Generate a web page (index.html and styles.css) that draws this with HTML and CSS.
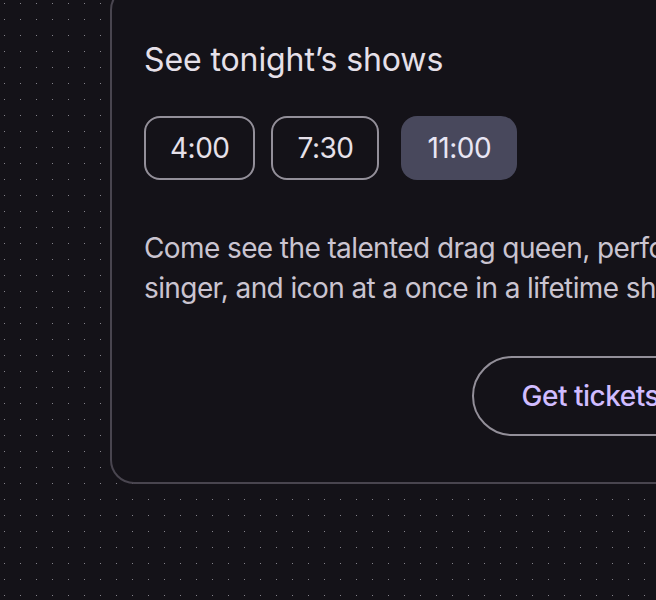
FILE: index.html
```html
<!DOCTYPE html>
<html lang="en">
<head>
<meta charset="utf-8">
<title>Tonight's shows</title>
<link rel="stylesheet" href="styles.css">
</head>
<body>
  <main class="card">
    <h2 class="title">See tonight’s shows</h2>
    <div class="chips">
      <button class="chip">4:00</button>
      <button class="chip">7:30</button>
      <button class="chip selected">11:00</button>
    </div>
    <p class="desc">Come see the talented drag queen, performer,<br>singer, and icon at a once in a lifetime show.</p>
    <div class="actions">
      <button class="btn">Get tickets</button>
    </div>
  </main>
</body>
</html>
```
FILE: styles.css
```css
html, body {
  margin: 0;
  height: 600px;
  overflow: hidden;
}
body {
  font-family: Inter, Roboto, "Liberation Sans", sans-serif;
  background-color: #141218;
  background-image: url("data:image/svg+xml,%3Csvg xmlns='http://www.w3.org/2000/svg' width='16' height='16'%3E%3Crect width='1' height='1' fill='%2385838b'/%3E%3C/svg%3E");
  background-position: 20px 19px;
  background-size: 16px 16px;
}
.card {
  display: block;
  box-sizing: border-box;
  width: 633px;
  margin: -14px 0 0 110px;
  border: 2px solid #49454f;
  border-radius: 24px;
  background: #141218;
  padding: 48px 32px 46px;
}
.title {
  margin: 0 0 32px;
  font-size: 32px;
  line-height: 48px;
  font-weight: 400;
  letter-spacing: -0.1px;
  color: #e6e0e9;
}
.chips {
  display: flex;
  gap: 16px;
}
.chip {
  box-sizing: border-box;
  height: 64px;
  padding: 0 24px;
  border: 2px solid #938f99;
  border-radius: 16px;
  background: transparent;
  color: #e6e0e9;
  font-family: inherit;
  font-size: 28px;
  font-weight: 400;
  letter-spacing: -0.5px;
}
.chip.selected {
  margin-left: 6px;
  border-color: transparent;
  background: #48485c;
  color: #e8e6f4;
}
.desc {
  margin: 48px 0 0;
  font-size: 28px;
  line-height: 40px;
  letter-spacing: -0.6px;
  color: #cac4d0;
  white-space: nowrap;
}
.actions {
  display: flex;
  justify-content: flex-end;
  margin-top: 48px;
}
.btn {
  box-sizing: border-box;
  height: 80px;
  padding: 0 48px;
  border: 2px solid #938f99;
  border-radius: 40px;
  background: transparent;
  color: #d0bcff;
  font-family: inherit;
  font-size: 28px;
  font-weight: 500;
  letter-spacing: -0.5px;
}
```
